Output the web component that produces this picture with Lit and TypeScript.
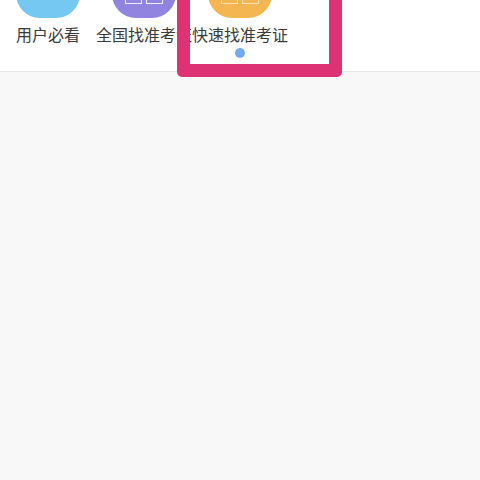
import { LitElement, html, css } from "lit";
import { customElement } from "lit/decorators.js";

interface Item { label: string; tone: string; book: boolean; }
const ITEMS: Item[] = [
  { label: "用户必看", tone: "blue", book: false },
  { label: "全国找准考证", tone: "purple", book: true },
  { label: "快速找准考证", tone: "orange", book: true },
];

@customElement("app-root")
export class AppRoot extends LitElement {
  static styles = css`
    :host {
      display: block;
      width: 480px;
      height: 480px;
      overflow: hidden;
      position: relative;
      background: #f8f8f8;
      font-family: "Noto Sans CJK SC", "Liberation Sans", sans-serif;
    }
    .bar {
      height: 71px;
      background: #fff;
      border-bottom: 1px solid #e8e8e8;
      overflow: hidden;
      position: relative;
    }
    .row {
      display: flex;
      gap: 32px;
      padding-left: 16px;
      margin-top: -46px;
    }
    .item {
      width: 64px;
      display: flex;
      flex-direction: column;
      align-items: center;
      gap: 5px;
    }
    .icon {
      width: 64px;
      height: 64px;
      border-radius: 24px;
      flex: none;
      position: relative;
    }
    .blue { background: #74c8f1; }
    .purple { background: #9184e0; }
    .orange { background: #f3b650; }
    .book {
      position: absolute;
      left: 13px;
      bottom: 14px;
      width: 38px;
      height: 18px;
      display: flex;
      gap: 4px;
    }
    .book span {
      flex: 1;
      border: 1px solid rgba(255, 255, 255, 0.85);
    }
    .orange .book span {
      border-color: rgba(255, 255, 255, 0.55);
    }
    .label {
      font-size: 16px;
      line-height: 22px;
      color: #3a3a3a;
      white-space: nowrap;
    }
    .dot {
      position: absolute;
      left: 235px;
      top: 48px;
      width: 10px;
      height: 10px;
      border-radius: 50%;
      background: #72aaee;
    }
    .frame {
      position: absolute;
      left: 176.5px;
      top: -20px;
      width: 165px;
      height: 97px;
      box-sizing: border-box;
      border: 13px solid #dd3273;
      border-radius: 5px;
    }
  `;

  render() {
    return html`
      <div class="bar">
        <div class="row">
          ${ITEMS.map(
            (i) => html`
              <div class="item">
                <div class="icon ${i.tone}">
                  ${i.book ? html`<div class="book"><span></span><span></span></div>` : ""}
                </div>
                <div class="label">${i.label}</div>
              </div>
            `
          )}
        </div>
        <div class="dot"></div>
      </div>
      <div class="frame"></div>
    `;
  }
}
